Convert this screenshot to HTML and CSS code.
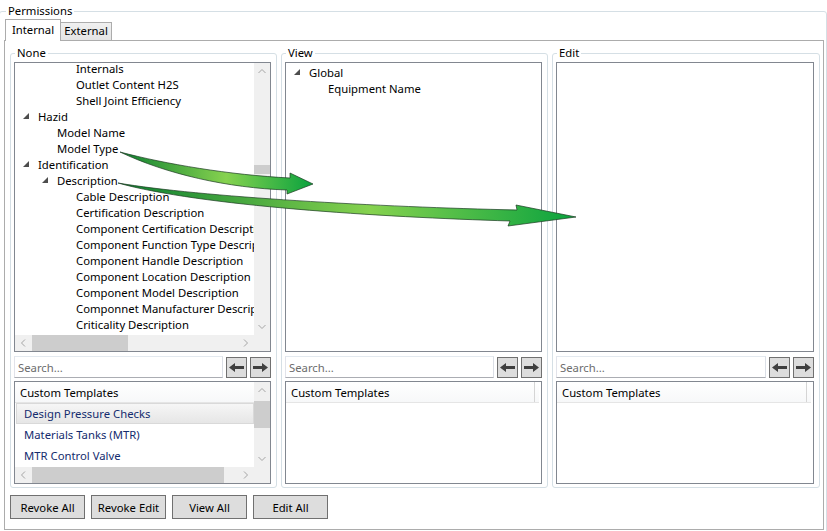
FILE: index.html
```html
<!DOCTYPE html>
<html lang="en">
<head>
  <meta charset="UTF-8">
  <title>Permissions</title>
  <link rel="stylesheet" href="styles.css">
</head>
<body>
  <fieldset class="permissions">
    <legend>Permissions</legend>
    <div class="tabs">
      <div class="tab active">Internal</div>
      <div class="tab">External</div>
    </div>
    <div class="tab-body">
      <div class="columns">

        <fieldset class="group">
          <legend>None</legend>
          <div class="tree with-bars">
            <div class="tree-view">
              <div class="rows scrolled">
                <div class="row lvl2"><span class="exp"></span>Internals</div>
                <div class="row lvl2"><span class="exp"></span>Outlet Content H2S</div>
                <div class="row lvl2"><span class="exp"></span>Shell Joint Efficiency</div>
                <div class="row lvl0"><span class="exp open"></span>Hazid</div>
                <div class="row lvl1"><span class="exp"></span>Model Name</div>
                <div class="row lvl1"><span class="exp"></span>Model Type</div>
                <div class="row lvl0"><span class="exp open"></span>Identification</div>
                <div class="row lvl1"><span class="exp open"></span>Description</div>
                <div class="row lvl2"><span class="exp"></span>Cable Description</div>
                <div class="row lvl2"><span class="exp"></span>Certification Description</div>
                <div class="row lvl2"><span class="exp"></span>Component Certification Description</div>
                <div class="row lvl2"><span class="exp"></span>Component Function Type Description</div>
                <div class="row lvl2"><span class="exp"></span>Component Handle Description</div>
                <div class="row lvl2"><span class="exp"></span>Component Location Description</div>
                <div class="row lvl2"><span class="exp"></span>Component Model Description</div>
                <div class="row lvl2"><span class="exp"></span>Componnet Manufacturer Description</div>
                <div class="row lvl2"><span class="exp"></span>Criticality Description</div>
              </div>
            </div>
            <div class="vbar">
              <svg class="chev" width="16" height="16" viewBox="0 0 16 16"><polyline points="4.5,10 8,6.5 11.5,10"/></svg>
              <div class="vtrack"><div class="thumb" style="top: 86px; height: 9px"></div></div>
              <svg class="chev" width="16" height="16" viewBox="0 0 16 16"><polyline points="4.5,6 8,9.5 11.5,6"/></svg>
            </div>
            <div class="hbar">
              <svg class="chev" width="16" height="16" viewBox="0 0 16 16"><polyline points="10,4.5 6.5,8 10,11.5"/></svg>
              <div class="htrack"><div class="thumb" style="left: 1px; width: 96px"></div></div>
              <svg class="chev" width="16" height="16" viewBox="0 0 16 16"><polyline points="6,4.5 9.5,8 6,11.5"/></svg>
            </div>
            <div class="corner"></div>
          </div>
          <div class="search-row">
            <input class="search" type="text" placeholder="Search...">
            <button class="arrow-btn"><svg width="15" height="9" viewBox="0 0 15 9"><polygon points="0,4.5 6,0 6,3 15,3 15,6 6,6 6,9"/></svg></button>
            <button class="arrow-btn"><svg width="15" height="9" viewBox="0 0 15 9"><polygon points="15,4.5 9,0 9,3 0,3 0,6 9,6 9,9"/></svg></button>
          </div>
          <div class="templates with-bars">
            <div class="list">
              <div class="list-head"><span>Custom Templates</span></div>
              <div class="item selected">Design Pressure Checks</div>
              <div class="item">Materials Tanks (MTR)</div>
              <div class="item">MTR Control Valve</div>
            </div>
            <div class="vbar">
              <svg class="chev" width="16" height="16" viewBox="0 0 16 16"><polyline points="4.5,10 8,6.5 11.5,10"/></svg>
              <div class="vtrack"><div class="thumb" style="top: 3px; height: 27px"></div></div>
              <svg class="chev" width="16" height="16" viewBox="0 0 16 16"><polyline points="4.5,6 8,9.5 11.5,6"/></svg>
            </div>
            <div class="hbar">
              <svg class="chev" width="16" height="16" viewBox="0 0 16 16"><polyline points="10,4.5 6.5,8 10,11.5"/></svg>
              <div class="htrack"><div class="thumb" style="left: 1px; width: 192px"></div></div>
              <svg class="chev" width="16" height="16" viewBox="0 0 16 16"><polyline points="6,4.5 9.5,8 6,11.5"/></svg>
            </div>
            <div class="corner"></div>
          </div>
        </fieldset>

        <fieldset class="group">
          <legend>View</legend>
          <div class="tree">
            <div class="tree-view">
              <div class="rows">
                <div class="row lvl0"><span class="exp open"></span>Global</div>
                <div class="row lvl1"><span class="exp"></span>Equipment Name</div>
              </div>
            </div>
          </div>
          <div class="search-row">
            <input class="search" type="text" placeholder="Search...">
            <button class="arrow-btn"><svg width="15" height="9" viewBox="0 0 15 9"><polygon points="0,4.5 6,0 6,3 15,3 15,6 6,6 6,9"/></svg></button>
            <button class="arrow-btn"><svg width="15" height="9" viewBox="0 0 15 9"><polygon points="15,4.5 9,0 9,3 0,3 0,6 9,6 9,9"/></svg></button>
          </div>
          <div class="templates">
            <div class="list">
              <div class="list-head split"><span>Custom Templates</span></div>
            </div>
          </div>
        </fieldset>

        <fieldset class="group">
          <legend>Edit</legend>
          <div class="tree">
            <div class="tree-view"></div>
          </div>
          <div class="search-row">
            <input class="search" type="text" placeholder="Search...">
            <button class="arrow-btn"><svg width="15" height="9" viewBox="0 0 15 9"><polygon points="0,4.5 6,0 6,3 15,3 15,6 6,6 6,9"/></svg></button>
            <button class="arrow-btn"><svg width="15" height="9" viewBox="0 0 15 9"><polygon points="15,4.5 9,0 9,3 0,3 0,6 9,6 9,9"/></svg></button>
          </div>
          <div class="templates">
            <div class="list">
              <div class="list-head split"><span>Custom Templates</span></div>
            </div>
          </div>
        </fieldset>

      </div>
      <div class="actions">
        <button class="btn">Revoke All</button>
        <button class="btn">Revoke Edit</button>
        <button class="btn">View All</button>
        <button class="btn">Edit All</button>
      </div>
    </div>
  </fieldset>

  <!-- drag hint arrows drawn over the lists -->
  <svg class="arrows" width="827" height="531" viewBox="0 0 827 531">
    <defs>
      <linearGradient id="g1" gradientUnits="userSpaceOnUse" x1="120" y1="0" x2="313" y2="0">
        <stop offset="0" stop-color="#0c7f30"/>
        <stop offset="0.55" stop-color="#86d24f"/>
        <stop offset="1" stop-color="#0aa23e"/>
      </linearGradient>
      <linearGradient id="g2" gradientUnits="userSpaceOnUse" x1="118" y1="0" x2="576" y2="0">
        <stop offset="0" stop-color="#0c7f30"/>
        <stop offset="0.55" stop-color="#86d24f"/>
        <stop offset="1" stop-color="#0aa23e"/>
      </linearGradient>
    </defs>
    <path d="M120,152 C165,164 230,175 290,178 L290,173 L313,184 L287,194 L287,190 C228,188 166,174 120,152 Z" fill="url(#g1)" stroke="#1d3b22" stroke-width="0.7"/>
    <path d="M118,183 C200,197 380,207 517,210 L516,205 L576,217 L508,226 L510,221 C380,217 200,206 118,183 Z" fill="url(#g2)" stroke="#1d3b22" stroke-width="0.7"/>
  </svg>
</body>
</html>
```

FILE: styles.css
```css
:root {
  --group-line: #d5dfe5;
  --tab-line: #acacac;
  --box-line: #828790;
  --btn-bg: #dddddd;
  --btn-line: #707070;
  --bar-bg: #f0f0f0;
  --thumb: #cdcdcd;
  --item-blue: #142c6e;
}
body {
  margin: 0;
  width: 827px;
  height: 531px;
  overflow: hidden;
  position: relative;
  background: #fff;
  font-family: "Noto Sans", sans-serif;
  font-size: 11.3px;
  color: #000;
}
fieldset {
  margin: 0;
  min-width: 0;
}
legend {
  line-height: 16px;
  padding: 0 2px;
}
.permissions {
  margin: 3px 0 0 -1px;
  width: 828px;
  box-sizing: border-box;
  border: 1px solid var(--group-line);
  border-radius: 3px;
  padding: 0 2px 4px 4px;
}
.permissions > legend {
  margin-left: 2px;
}
.tabs {
  display: flex;
  align-items: flex-end;
  height: 21px;
  padding-left: 1px;
}
.tab {
  box-sizing: border-box;
  height: 18px;
  line-height: 16px;
  width: 52px;
  margin-left: -1px;
  text-align: center;
  border: 1px solid var(--tab-line);
  border-bottom: none;
  background: linear-gradient(#f0f0f0, #e5e5e5);
}
.tab.active {
  position: relative;
  z-index: 1;
  height: 22px;
  width: 56px;
  margin: 0 0 -1px 0;
  line-height: 19px;
  background: #fff;
}
.tab-body {
  border: 1px solid var(--tab-line);
  height: 484px;
  padding: 4px 2px 0 5px;
}
.columns {
  display: grid;
  grid-template-columns: 267px 267px 268px;
  gap: 4px;
}
.group {
  border: 1px solid var(--group-line);
  border-radius: 3px;
  padding: 0 5px 3px 3px;
  display: flex;
  flex-direction: column;
}
.group > legend {
  margin-left: 1px;
}
.tree,
.templates {
  box-sizing: border-box;
  border: 1px solid var(--box-line);
  background: #fff;
  display: grid;
  grid-template-columns: 1fr;
  grid-template-rows: 1fr;
}
.tree {
  margin-top: 1px;
  height: 290px;
}
.templates {
  margin-top: 3px;
  height: 103px;
}
.tree.with-bars,
.templates.with-bars {
  grid-template-columns: 1fr 16px;
  grid-template-rows: 1fr 16px;
}
.tree-view,
.list {
  overflow: hidden;
  min-width: 0;
  min-height: 0;
}
.rows {
  padding-top: 2px;
}
.rows.scrolled {
  margin-top: -4px;
}
.row {
  height: 16px;
  line-height: 16px;
  white-space: nowrap;
  display: flex;
  align-items: center;
}
.lvl1 { padding-left: 19px; }
.lvl2 { padding-left: 38px; }
.exp {
  flex: none;
  width: 23px;
  height: 16px;
  position: relative;
}
.exp.open::before {
  content: "";
  position: absolute;
  left: 8px;
  top: 4px;
  width: 0;
  height: 0;
  border-left: 6px solid transparent;
  border-bottom: 6px solid #4d4d4d;
}
.vbar,
.hbar,
.corner {
  background: var(--bar-bg);
  min-height: 0;
}
.vbar {
  display: flex;
  flex-direction: column;
}
.hbar {
  display: flex;
}
.vtrack,
.htrack {
  flex: 1;
  position: relative;
}
.thumb {
  position: absolute;
  background: var(--thumb);
}
.vtrack .thumb { left: 0; right: 0; }
.htrack .thumb { top: 0; bottom: 0; }
.chev {
  flex: none;
  display: block;
}
.chev polyline {
  fill: none;
  stroke: #a5a5a5;
  stroke-width: 1;
}
.search-row {
  display: flex;
  align-items: center;
  margin-top: 4px;
  height: 22px;
}
.search {
  flex: 1;
  min-width: 0;
  height: 22px;
  box-sizing: border-box;
  margin: 0 2px 0 0;
  border: 1px solid #abadb3;
  border-top-color: #e3e9ef;
  border-left-color: #e2e3ea;
  border-right-color: #dbdfe6;
  padding: 0 3px;
  font: inherit;
  outline: none;
}
.search::placeholder {
  color: #6d6d6d;
}
.arrow-btn {
  flex: none;
  width: 21px;
  height: 21px;
  margin-left: 3px;
  padding: 0;
  background: var(--btn-bg);
  border: 1px solid var(--btn-line);
  display: flex;
  align-items: center;
  justify-content: center;
}
.arrow-btn:first-of-type {
  margin-left: 1px;
}
.arrow-btn polygon {
  fill: #3f3f3f;
}
.list-head {
  height: 20px;
  line-height: 21px;
  padding-left: 5px;
  border-bottom: 1px solid #e5e5e5;
  background: linear-gradient(#fff, #f7f8f9);
  white-space: nowrap;
}
.list-head.split {
  margin-right: 2px;
  position: relative;
}
.list-head.split::after {
  content: "";
  position: absolute;
  right: 4px;
  top: 0;
  bottom: 0;
  border-left: 1px solid #d5d5d5;
}
.item {
  height: 21px;
  line-height: 21px;
  padding-left: 9px;
  color: var(--item-blue);
  white-space: nowrap;
}
.item.selected {
  margin-left: 1px;
  padding-left: 7px;
  height: 19px;
  line-height: 19px;
  border: 1px solid #d9d9d9;
  background: linear-gradient(#f6f6f6, #e6e6e6);
}
.actions {
  display: flex;
  gap: 6px;
  margin-top: 7px;
}
.btn {
  width: 75px;
  height: 24px;
  padding: 0;
  background: var(--btn-bg);
  border: 1px solid var(--btn-line);
  font: inherit;
  color: #000;
}
.arrows {
  position: absolute;
  left: 0;
  top: 0;
  pointer-events: none;
}
```
